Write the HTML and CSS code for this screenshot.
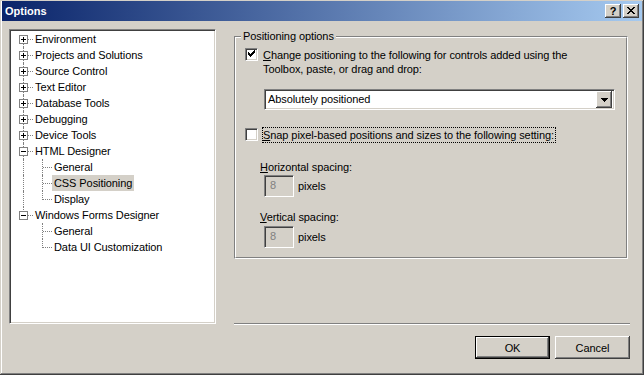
FILE: index.html
```html
<!DOCTYPE html>
<html>
<head>
<meta charset="utf-8">
<title>Options</title>
<link rel="stylesheet" href="styles.css">
</head>
<body>
<div class="window">
  <div class="titlebar">
    <span class="title">Options</span>
    <div class="tbtns">
      <span class="tbtn q">?</span>
      <span class="tbtn">
        <svg width="8" height="7" viewBox="0 0 8 7" shape-rendering="crispEdges">
          <path d="M0 0h2v1h-2zM6 0h2v1h-2zM1 1h2v1h-2zM5 1h2v1h-2zM2 2h4v1h-4zM3 3h2v1h-2zM2 4h4v1h-4zM1 5h2v1h-2zM5 5h2v1h-2zM0 6h2v1h-2zM6 6h2v1h-2z" fill="#000"/>
        </svg>
      </span>
    </div>
  </div>
  <div class="body">
    <div class="main">
      <div class="tree">
        <div class="row"><span class="c v first h"><i class="box plus"></i></span><span class="lbl">Environment</span></div>
        <div class="row"><span class="c v h"><i class="box plus"></i></span><span class="lbl">Projects and Solutions</span></div>
        <div class="row"><span class="c v h"><i class="box plus"></i></span><span class="lbl">Source Control</span></div>
        <div class="row"><span class="c v h"><i class="box plus"></i></span><span class="lbl">Text Editor</span></div>
        <div class="row"><span class="c v h"><i class="box plus"></i></span><span class="lbl">Database Tools</span></div>
        <div class="row"><span class="c v h"><i class="box plus"></i></span><span class="lbl">Debugging</span></div>
        <div class="row"><span class="c v h"><i class="box plus"></i></span><span class="lbl">Device Tools</span></div>
        <div class="row"><span class="c v h"><i class="box"></i></span><span class="lbl">HTML Designer</span></div>
        <div class="row"><span class="c v"></span><span class="c v h"></span><span class="lbl">General</span></div>
        <div class="row"><span class="c v"></span><span class="c v h"></span><span class="lbl sel">CSS Positioning</span></div>
        <div class="row"><span class="c v"></span><span class="c v last h"></span><span class="lbl">Display</span></div>
        <div class="row"><span class="c v last h"><i class="box"></i></span><span class="lbl">Windows Forms Designer</span></div>
        <div class="row"><span class="c"></span><span class="c v h"></span><span class="lbl">General</span></div>
        <div class="row"><span class="c"></span><span class="c v last h"></span><span class="lbl">Data UI Customization</span></div>
      </div>
      <div class="right">
        <div class="group">
          <div class="group-in">
            <span class="legend">Positioning options</span>
            <div class="check-row first-row">
              <span class="checkbox">
                <svg width="9" height="9" viewBox="0 0 9 9" shape-rendering="crispEdges">
                  <path d="M1 2h1v3h-1zM2 3h1v3h-1zM3 4h1v3h-1zM4 3h1v3h-1zM5 2h1v3h-1zM6 1h1v3h-1zM7 0h1v3h-1z" fill="#000"/>
                </svg>
              </span>
              <span class="clabel"><u>C</u>hange positioning to the following for controls added using the<br>Toolbox, paste, or drag and drop:</span>
            </div>
            <div class="combo">
              <span class="combo-text">Absolutely positioned</span>
              <span class="combo-btn">
                <svg width="7" height="4" viewBox="0 0 7 4" shape-rendering="crispEdges">
                  <path d="M0 0h7v1h-7zM1 1h5v1h-5zM2 2h3v1h-3zM3 3h1v1h-1z" fill="#000"/>
                </svg>
              </span>
            </div>
            <div class="check-row second-row">
              <span class="checkbox"></span>
              <span class="clabel focus"><u>S</u>nap pixel-based positions and sizes to the following setting:</span>
            </div>
            <div class="field-label hlabel"><u>H</u>orizontal spacing:</div>
            <div class="spin-row hspin">
              <span class="numbox">8</span>
              <span class="unit">pixels</span>
            </div>
            <div class="field-label vlabel"><u>V</u>ertical spacing:</div>
            <div class="spin-row vspin">
              <span class="numbox">8</span>
              <span class="unit">pixels</span>
            </div>
          </div>
        </div>
        <div class="sep"></div>
      </div>
    </div>
    <div class="buttons">
      <span class="btn default">OK</span>
      <span class="btn">Cancel</span>
    </div>
  </div>
</div>
</body>
</html>
```

FILE: styles.css
```css
html, body {
  margin: 0;
  padding: 0;
  background: #d4d0c8;
}

body {
  font-family: "Liberation Sans", Arial, sans-serif;
  font-size: 11px;
  color: #000;
}

.window {
  width: 644px;
  height: 375px;
  box-sizing: border-box;
  padding: 1px 2px 2px 2px;
  background: #d4d0c8;
  box-shadow: inset -1px -1px 0 #404040, inset 1px 1px 0 #d4d0c8,
              inset -2px -2px 0 #808080, inset 2px 2px 0 #ffffff;
  display: flex;
  flex-direction: column;
}

/* Title bar */
.titlebar {
  height: 20px;
  flex: none;
  display: flex;
  align-items: center;
  justify-content: space-between;
  padding: 0 3px 0 3px;
  background: linear-gradient(to right, #0a246a, #a6caf0);
}

.title {
  color: #fff;
  font-weight: bold;
  font-size: 11px;
  line-height: 14px;
}

.tbtns {
  display: flex;
  gap: 2px;
}

.tbtn {
  width: 16px;
  height: 14px;
  box-sizing: border-box;
  background: #d4d0c8;
  box-shadow: inset -1px -1px 0 #404040, inset 1px 1px 0 #ffffff,
              inset -2px -2px 0 #808080;
  display: flex;
  align-items: center;
  justify-content: center;
}

.tbtn svg {
  display: block;
  margin-top: -1px;
}

.tbtn.q {
  font-weight: bold;
  font-size: 11px;
  line-height: 12px;
  padding-bottom: 1px;
}

/* Body */
.body {
  flex: 1;
  display: flex;
  flex-direction: column;
  padding: 8px 0 0 7px;
  letter-spacing: -0.08px;
}

.main {
  display: flex;
  align-items: flex-start;
  height: 296px;
}

/* Tree */
.tree {
  width: 207px;
  height: 295px;
  box-sizing: border-box;
  flex: none;
  background: #fff;
  border: 1px solid;
  border-color: #808080 #ffffff #ffffff #808080;
  box-shadow: inset 1px 1px 0 #404040, inset -1px -1px 0 #d4d0c8;
  padding: 1px 0 0 1px;
}

.row {
  display: flex;
  height: 16px;
  padding-left: 3px;
}

.c {
  width: 19px;
  height: 16px;
  flex: none;
  position: relative;
}

.c.v::before {
  content: "";
  position: absolute;
  left: 9px;
  top: 0;
  bottom: 0;
  border-left: 1px dotted #808080;
}

.c.v.first::before {
  top: 8px;
}

.c.v.last::before {
  bottom: auto;
  height: 9px;
}

.c.h::after {
  content: "";
  position: absolute;
  left: 10px;
  top: 8px;
  width: 9px;
  border-top: 1px dotted #808080;
}

.box {
  position: absolute;
  left: 5px;
  top: 4px;
  width: 9px;
  height: 9px;
  box-sizing: border-box;
  border: 1px solid #808080;
  background: #fff;
  z-index: 1;
}

.box::before {
  content: "";
  position: absolute;
  left: 1px;
  top: 3px;
  width: 5px;
  height: 1px;
  background: #000;
}

.box.plus::after {
  content: "";
  position: absolute;
  left: 3px;
  top: 1px;
  width: 1px;
  height: 5px;
  background: #000;
}

.lbl {
  padding: 0 2px;
  line-height: 16px;
  white-space: nowrap;
}

.lbl.sel {
  background: #d4d0c8;
}

/* Right column */
.right {
  margin-left: 18px;
  width: 396px;
  height: 296px;
  display: flex;
  flex-direction: column;
  padding-top: 7px;
  box-sizing: border-box;
}

.group {
  width: 394px;
  height: 223px;
  box-sizing: border-box;
  border: 1px solid;
  border-color: #808080 #ffffff #ffffff #808080;
}

.group-in {
  height: 100%;
  box-sizing: border-box;
  border: 1px solid;
  border-color: #ffffff #808080 #808080 #ffffff;
  position: relative;
  display: flex;
  flex-direction: column;
  align-items: flex-start;
}

.legend {
  position: absolute;
  left: 5px;
  top: -8px;
  padding: 0 2px;
  line-height: 13px;
  background: #d4d0c8;
}

.check-row {
  display: flex;
  align-items: flex-start;
  margin-left: 9px;
}

.first-row {
  margin-top: 9px;
}

.second-row {
  margin-top: 17px;
}

.checkbox {
  width: 13px;
  height: 13px;
  box-sizing: border-box;
  margin-top: 1px;
  background: #fff;
  border: 1px solid;
  border-color: #808080 #ffffff #ffffff #808080;
  box-shadow: inset 1px 1px 0 #404040, inset -1px -1px 0 #d4d0c8;
  display: flex;
  align-items: center;
  justify-content: center;
  flex: none;
}

.checkbox svg {
  display: block;
}

.clabel {
  margin-left: 4px;
  line-height: 14px;
  border: 1px solid transparent;
  padding: 0 1px 0 0;
  white-space: nowrap;
}

.clabel.focus {
  border: 1px dotted #000;
}

/* Combo */
.combo {
  margin: 12px 0 0 28px;
  width: 351px;
  height: 21px;
  box-sizing: border-box;
  background: #fff;
  border: 1px solid;
  border-color: #808080 #ffffff #ffffff #808080;
  box-shadow: inset 1px 1px 0 #404040, inset -1px -1px 0 #d4d0c8;
  padding: 2px 2px 2px 3px;
  display: flex;
  align-items: center;
  justify-content: space-between;
}

.combo-text {
  line-height: 17px;
}

.combo-btn {
  width: 16px;
  height: 17px;
  box-sizing: border-box;
  background: #d4d0c8;
  box-shadow: inset -1px -1px 0 #404040, inset 1px 1px 0 #ffffff,
              inset -2px -2px 0 #808080;
  display: flex;
  align-items: center;
  justify-content: center;
}

.combo-btn svg {
  display: block;
}

/* Spacing fields */
.field-label {
  margin-left: 24px;
  line-height: 14px;
}

.hlabel {
  margin-top: 17px;
}

.vlabel {
  margin-top: 13px;
}

.spin-row {
  display: flex;
  align-items: center;
  margin-left: 28px;
}

.hspin {
  margin-top: 1px;
}

.vspin {
  margin-top: 2px;
}

.numbox {
  width: 30px;
  height: 22px;
  box-sizing: border-box;
  background: #d4d0c8;
  border: 1px solid;
  border-color: #808080 #ffffff #ffffff #808080;
  box-shadow: inset 1px 1px 0 #404040, inset -1px -1px 0 #d4d0c8;
  color: #808080;
  padding: 0 0 0 5px;
  line-height: 18px;
}

.unit {
  margin-left: 4px;
}

.sep {
  margin-top: auto;
  height: 0;
  border-top: 1px solid #808080;
  border-bottom: 1px solid #ffffff;
}

/* Buttons */
.buttons {
  display: flex;
  justify-content: flex-end;
  gap: 5px;
  margin-top: 11px;
  padding-right: 12px;
}

.btn {
  width: 75px;
  height: 23px;
  box-sizing: border-box;
  display: flex;
  align-items: center;
  justify-content: center;
  background: #d4d0c8;
  box-shadow: inset -1px -1px 0 #404040, inset 1px 1px 0 #ffffff,
              inset -2px -2px 0 #808080;
}

.btn.default {
  border: 1px solid #000;
}
```
